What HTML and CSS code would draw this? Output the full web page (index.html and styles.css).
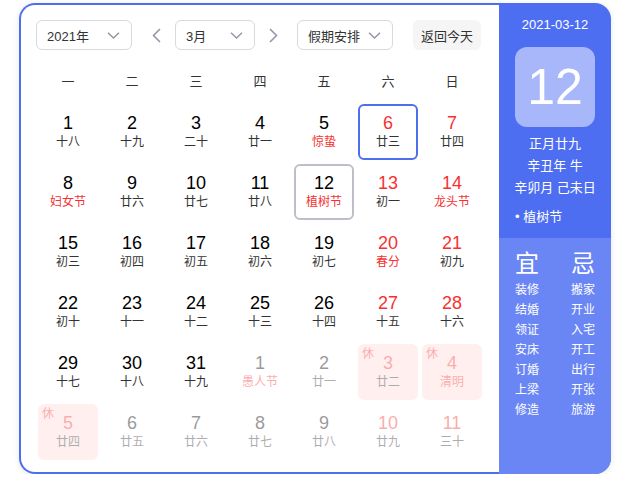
FILE: index.html
```html
<!DOCTYPE html>
<html lang="zh-CN">
<head>
    <meta charset="UTF-8">
    <meta name="viewport" content="width=device-width, initial-scale=1.0">
    <title>万年历</title>
    <link rel="stylesheet" href="styles.css">
</head>
<body>

    <div class="calendar">
        <!-- Month view -->
        <div class="main">
            <div class="toolbar">
                <div class="select select-year">
                    <span>2021年</span>
                    <svg width="13" height="7" viewBox="0 0 13 7"><path d="M1 0.8 L6.5 6 L12 0.8" fill="none" stroke="#9195a3" stroke-width="1.4"/></svg>
                </div>
                <span class="arrow arrow-prev">
                    <svg width="9" height="15" viewBox="0 0 9 15"><path d="M8 1 L1.5 7.5 L8 14" fill="none" stroke="#9195a3" stroke-width="1.5"/></svg>
                </span>
                <div class="select select-month">
                    <span>3月</span>
                    <svg width="13" height="7" viewBox="0 0 13 7"><path d="M1 0.8 L6.5 6 L12 0.8" fill="none" stroke="#9195a3" stroke-width="1.4"/></svg>
                </div>
                <span class="arrow arrow-next">
                    <svg width="9" height="15" viewBox="0 0 9 15"><path d="M1 1 L7.5 7.5 L1 14" fill="none" stroke="#9195a3" stroke-width="1.5"/></svg>
                </span>
                <div class="select select-holiday">
                    <span>假期安排</span>
                    <svg width="13" height="7" viewBox="0 0 13 7"><path d="M1 0.8 L6.5 6 L12 0.8" fill="none" stroke="#9195a3" stroke-width="1.4"/></svg>
                </div>
                <button class="today-btn">返回今天</button>
            </div>

            <div class="weekdays">
                <span>一</span><span>二</span><span>三</span><span>四</span><span>五</span><span>六</span><span>日</span>
            </div>

            <div class="days">
                <div class="day"><div class="num">1</div><div class="lunar">十八</div></div>
                <div class="day"><div class="num">2</div><div class="lunar">十九</div></div>
                <div class="day"><div class="num">3</div><div class="lunar">二十</div></div>
                <div class="day"><div class="num">4</div><div class="lunar">廿一</div></div>
                <div class="day festival"><div class="num">5</div><div class="lunar">惊蛰</div></div>
                <div class="day weekend selected"><div class="num">6</div><div class="lunar">廿三</div></div>
                <div class="day weekend"><div class="num">7</div><div class="lunar">廿四</div></div>

                <div class="day festival"><div class="num">8</div><div class="lunar">妇女节</div></div>
                <div class="day"><div class="num">9</div><div class="lunar">廿六</div></div>
                <div class="day"><div class="num">10</div><div class="lunar">廿七</div></div>
                <div class="day"><div class="num">11</div><div class="lunar">廿八</div></div>
                <div class="day festival today"><div class="num">12</div><div class="lunar">植树节</div></div>
                <div class="day weekend"><div class="num">13</div><div class="lunar">初一</div></div>
                <div class="day weekend festival"><div class="num">14</div><div class="lunar">龙头节</div></div>

                <div class="day"><div class="num">15</div><div class="lunar">初三</div></div>
                <div class="day"><div class="num">16</div><div class="lunar">初四</div></div>
                <div class="day"><div class="num">17</div><div class="lunar">初五</div></div>
                <div class="day"><div class="num">18</div><div class="lunar">初六</div></div>
                <div class="day"><div class="num">19</div><div class="lunar">初七</div></div>
                <div class="day weekend festival"><div class="num">20</div><div class="lunar">春分</div></div>
                <div class="day weekend"><div class="num">21</div><div class="lunar">初九</div></div>

                <div class="day"><div class="num">22</div><div class="lunar">初十</div></div>
                <div class="day"><div class="num">23</div><div class="lunar">十一</div></div>
                <div class="day"><div class="num">24</div><div class="lunar">十二</div></div>
                <div class="day"><div class="num">25</div><div class="lunar">十三</div></div>
                <div class="day"><div class="num">26</div><div class="lunar">十四</div></div>
                <div class="day weekend"><div class="num">27</div><div class="lunar">十五</div></div>
                <div class="day weekend"><div class="num">28</div><div class="lunar">十六</div></div>

                <div class="day"><div class="num">29</div><div class="lunar">十七</div></div>
                <div class="day"><div class="num">30</div><div class="lunar">十八</div></div>
                <div class="day"><div class="num">31</div><div class="lunar">十九</div></div>
                <div class="day other festival"><div class="num">1</div><div class="lunar">愚人节</div></div>
                <div class="day other"><div class="num">2</div><div class="lunar">廿一</div></div>
                <div class="day other weekend rest"><span class="rest-tag">休</span><div class="num">3</div><div class="lunar">廿二</div></div>
                <div class="day other weekend festival rest"><span class="rest-tag">休</span><div class="num">4</div><div class="lunar">清明</div></div>

                <div class="day other weekend rest"><span class="rest-tag">休</span><div class="num">5</div><div class="lunar">廿四</div></div>
                <div class="day other"><div class="num">6</div><div class="lunar">廿五</div></div>
                <div class="day other"><div class="num">7</div><div class="lunar">廿六</div></div>
                <div class="day other"><div class="num">8</div><div class="lunar">廿七</div></div>
                <div class="day other"><div class="num">9</div><div class="lunar">廿八</div></div>
                <div class="day other weekend"><div class="num">10</div><div class="lunar">廿九</div></div>
                <div class="day other weekend"><div class="num">11</div><div class="lunar">三十</div></div>
            </div>
        </div>

        <!-- Selected day details -->
        <div class="side">
            <div class="side-top">
                <div class="side-date">2021-03-12</div>
                <div class="side-day">12</div>
                <div class="side-lunar">
                    <div>正月廿九</div>
                    <div>辛丑年 牛</div>
                    <div>辛卯月 己未日</div>
                </div>
                <div class="side-fest">• 植树节</div>
            </div>
            <div class="side-yiji">
                <div class="yiji-col">
                    <div class="yiji-title">宜</div>
                    <div>装修</div>
                    <div>结婚</div>
                    <div>领证</div>
                    <div>安床</div>
                    <div>订婚</div>
                    <div>上梁</div>
                    <div>修造</div>
                </div>
                <div class="yiji-col">
                    <div class="yiji-title">忌</div>
                    <div>搬家</div>
                    <div>开业</div>
                    <div>入宅</div>
                    <div>开工</div>
                    <div>出行</div>
                    <div>开张</div>
                    <div>旅游</div>
                </div>
            </div>
        </div>
    </div>

</body>
</html>
```

FILE: styles.css
```css
body {
    margin: 0;
    background-color: #fff;
    font-family: "Liberation Sans", "Noto Sans CJK SC", sans-serif;
    color: #333;
}
.calendar {
    display: flex;
    width: 592px;
    height: 471px;
    margin: 3px 0 0 19px;
    border-radius: 16px;
    box-shadow: 0 1px 6px rgba(0, 0, 0, 0.1);
}
.main {
    width: 480px;
    box-sizing: border-box;
    border: 2px solid #4e6ef2;
    border-right: none;
    border-radius: 16px 0 0 16px;
    padding: 15px 17px 11px 15px;
}
.toolbar {
    display: flex;
    align-items: center;
    height: 30px;
}
.select {
    display: flex;
    align-items: center;
    justify-content: space-between;
    height: 30px;
    box-sizing: border-box;
    border: 1px solid #d7d9e0;
    border-radius: 6px;
    padding: 0 11px 0 10px;
    font-size: 13px;
    color: #333;
}
.select svg {
    display: block;
}
.select-year {
    width: 96px;
}
.select-month {
    width: 80px;
}
.select-holiday {
    width: 96px;
    margin-right: 20px;
}
.arrow svg {
    display: block;
}
.arrow-prev {
    margin: 0 14px 0 20px;
}
.arrow-next {
    margin: 0 19px 0 14px;
}
.today-btn {
    width: 68px;
    height: 30px;
    padding: 0;
    border: none;
    border-radius: 6px;
    background-color: #f5f5f6;
    font-family: inherit;
    font-size: 13px;
    color: #333;
}
.weekdays, .days {
    display: grid;
    grid-template-columns: repeat(7, 60px);
    column-gap: 4px;
    margin-left: 2px;
}
.weekdays {
    margin-top: 14px;
    height: 36px;
    line-height: 36px;
    text-align: center;
    font-size: 13px;
    color: #333;
}
.days {
    grid-auto-rows: 56px;
    row-gap: 4px;
    margin-top: 4px;
}
.day {
    position: relative;
    box-sizing: border-box;
    border: 2px solid transparent;
    border-radius: 6px;
    padding-top: 7px;
    text-align: center;
}
.num {
    font-size: 18px;
    line-height: 20px;
    color: #000;
}
.lunar {
    font-size: 12px;
    line-height: 18px;
    color: #333;
}
.weekend .num,
.festival .lunar,
.rest .num {
    color: #f73131;
}
.today {
    border-color: #bdbfc8;
}
.selected {
    border-color: #4e6ef2;
}
.rest {
    background-color: #ffd9d9;
}
.rest-tag {
    position: absolute;
    top: 1px;
    left: 2px;
    font-size: 12px;
    line-height: 14px;
    color: #f73131;
}
.other {
    opacity: 0.4;
}
.side {
    display: flex;
    flex-direction: column;
    width: 112px;
    background-color: #4e6ef2;
    border-radius: 0 16px 16px 0;
    overflow: hidden;
    color: #fff;
}
.side-top {
    padding: 13px 0 10px;
    text-align: center;
}
.side-date {
    font-size: 13px;
    line-height: 18px;
}
.side-day {
    width: 80px;
    height: 80px;
    margin: 13px auto 0;
    border-radius: 12px;
    background-color: rgba(255, 255, 255, 0.5);
    font-size: 50px;
    line-height: 80px;
}
.side-lunar {
    margin-top: 6px;
    font-size: 13px;
    line-height: 22px;
}
.side-fest {
    margin-top: 7px;
    padding-left: 16px;
    text-align: left;
    font-size: 13px;
    line-height: 22px;
}
.side-yiji {
    flex: 1;
    display: flex;
    padding-top: 10px;
    background-color: #6a86f5;
}
.yiji-col {
    width: 56px;
    text-align: center;
    font-size: 12px;
    line-height: 20px;
}
.yiji-title {
    font-size: 24px;
    line-height: 32px;
}
```
